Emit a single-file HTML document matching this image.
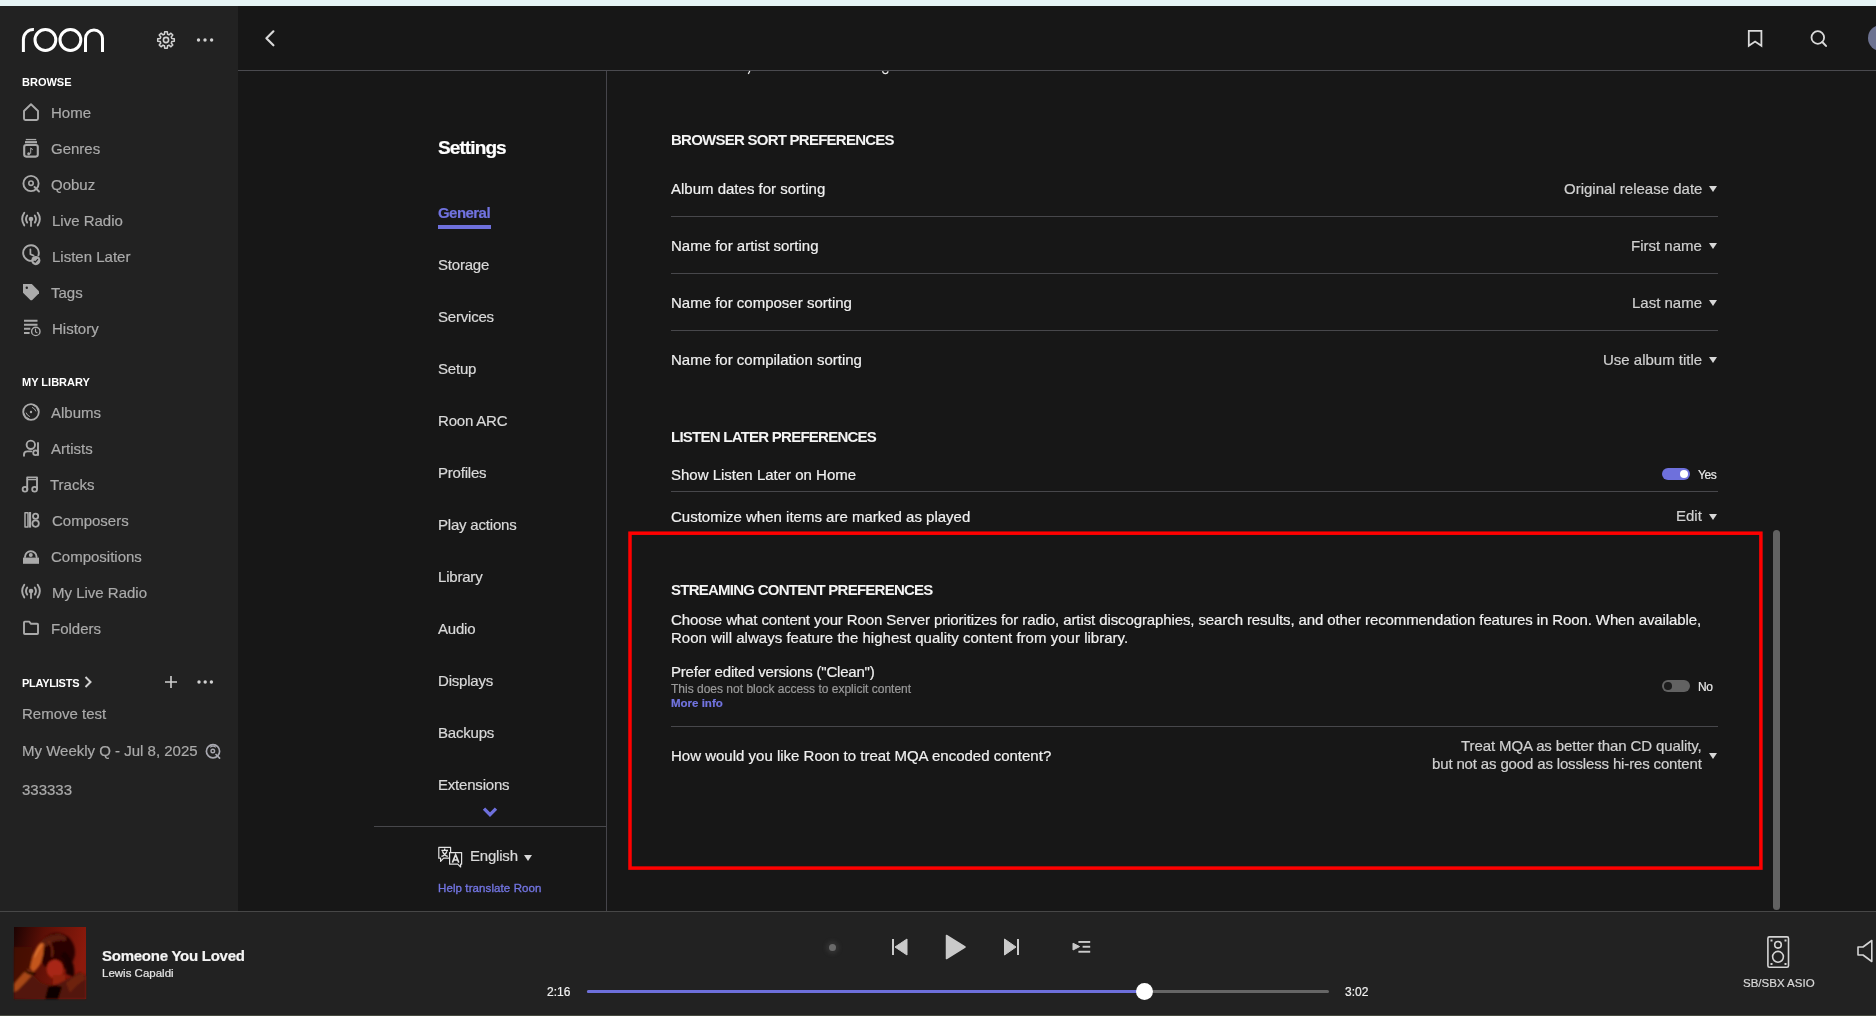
<!DOCTYPE html>
<html><head><meta charset="utf-8">
<style>
*{margin:0;padding:0;box-sizing:border-box}
html,body{width:1876px;height:1016px;overflow:hidden;background:#171717;font-family:"Liberation Sans",sans-serif}
.a{position:absolute}
.t{position:absolute;line-height:1;white-space:nowrap;will-change:transform;-webkit-text-stroke:0.2px currentColor}
svg{position:absolute;overflow:visible}
#strip{left:0;top:0;width:1876px;height:6px;background:#e6f4f5}
#side{left:0;top:6px;width:238px;height:905px;background:#222222}
#hdr{left:238px;top:6px;width:1638px;height:64px;background:#171717}
#hline{left:238px;top:70px;width:1638px;height:1px;background:#4a4a4f}
#player{left:0;top:911px;width:1876px;height:105px;background:#222222}
#pline{left:0;top:911px;width:1876px;height:1px;background:#474747}
.sh{font-size:11px;font-weight:700;color:#ffffff;-webkit-text-stroke:0}
.si{font-size:15px;color:#aaaaaa}
.nav{font-size:15px;color:#d9d9d9;letter-spacing:-0.2px}
.h2{font-size:15px;font-weight:700;color:#f4f4f4;letter-spacing:-0.75px;-webkit-text-stroke:0}
.row{font-size:15px;color:#f0f0f0}
.val{font-size:15px;color:#d0d0d0}
.dv{position:absolute;height:1px;background:#47474b}
.tri{position:absolute;width:0;height:0;border-left:4.5px solid transparent;border-right:4.5px solid transparent;border-top:6px solid #d8d8d8}
</style></head><body>
<div id="strip" class="a"></div>
<div id="side" class="a"></div>
<div id="hdr" class="a"></div>

<!-- ============ SIDEBAR ============ -->
<svg style="left:0;top:0" width="120" height="60" viewBox="0 0 120 60">
 <g fill="none" stroke="#ffffff" stroke-width="3">
  <path d="M23.4 52 V39.5 A10 10 0 0 1 33.9 29.5"/>
  <circle cx="45.4" cy="40" r="10.4"/>
  <circle cx="70.4" cy="40" r="10.4"/>
  <path d="M85.5 52 V38.5 A8.5 8.5 0 0 1 102.5 38.5 V52"/>
 </g>
</svg>
<!-- gear -->
<svg style="left:156px;top:30px" width="20" height="20" viewBox="-10 -10 20 20">
 <path fill="none" stroke="#d2d2d2" stroke-width="1.5" stroke-linejoin="round" d="M-2.30 -5.54 L-1.55 -5.80 L-1.31 -8.30 L1.31 -8.30 L1.55 -5.80 L2.30 -5.54 L3.00 -5.20 L4.94 -6.80 L6.80 -4.94 L5.20 -3.00 L5.54 -2.30 L5.80 -1.55 L8.30 -1.31 L8.30 1.31 L5.80 1.55 L5.54 2.30 L5.20 3.00 L6.80 4.94 L4.94 6.80 L3.00 5.20 L2.30 5.54 L1.55 5.80 L1.31 8.30 L-1.31 8.30 L-1.55 5.80 L-2.30 5.54 L-3.00 5.20 L-4.94 6.80 L-6.80 4.94 L-5.20 3.00 L-5.54 2.30 L-5.80 1.55 L-8.30 1.31 L-8.30 -1.31 L-5.80 -1.55 L-5.54 -2.30 L-5.20 -3.00 L-6.80 -4.94 L-4.94 -6.80 L-3.00 -5.20 Z"/>
 <circle cx="0" cy="0" r="2.6" fill="none" stroke="#d2d2d2" stroke-width="1.6"/>
</svg>
<svg style="left:195px;top:36px" width="20" height="8" viewBox="0 0 20 8">
 <circle cx="3.5" cy="4" r="1.7" fill="#d2d2d2"/><circle cx="10" cy="4" r="1.7" fill="#d2d2d2"/><circle cx="16.6" cy="4" r="1.7" fill="#d2d2d2"/>
</svg>

<!-- sidebar icons -->
<svg style="left:0;top:0" width="238" height="911" viewBox="0 0 238 911">
 <g fill="none" stroke="#aaaaaa" stroke-width="1.9" stroke-linejoin="round" stroke-linecap="round">
  <!-- home -->
  <path d="M24 111 L31 104.3 L38 111 V118.6 Q38 120 36.6 120 H25.4 Q24 120 24 118.6 Z"/>
  <!-- genres -->
  <rect x="24.2" y="145" width="13.6" height="11.6" rx="2" stroke-width="2.1"/>
  <!-- qobuz -->
  <circle cx="31" cy="183.5" r="7.6"/>
  <circle cx="31" cy="183.2" r="2.2" stroke-width="1.6"/>
  <path d="M34.5 187 L39 191.5"/>
  <!-- live radio -->
  <path d="M27.2 215.5 Q24.8 219 27.2 222.6 M34.8 215.5 Q37.2 219 34.8 222.6"/>
  <path d="M24.3 212.8 Q20 219 24.3 225.4 M37.7 212.8 Q42 219 37.7 225.4"/>
  <path d="M31 219 V226" stroke-width="1.8"/>
  <!-- listen later -->
  <path d="M34.6 259.9 A7.8 7.8 0 1 1 38.4 255.4"/>
  <path d="M30.4 249.3 V254.2 L33.6 255.6" stroke-width="1.7"/>
  <!-- history -->
  <path d="M24 320.8 H37.5 M24 324.8 H37.5 M24 328.8 H30.3 M24 332.9 H29.6" stroke-width="2" stroke-linecap="butt"/>
  <circle cx="35.8" cy="331.4" r="4.2" stroke-width="1.4"/>
  <path d="M35.5 329 V331.8 L37 332.8" stroke-width="1.1"/>
  <!-- albums -->
  <circle cx="31" cy="412" r="7.8" stroke-width="1.8"/>
  <path d="M32.5 407.5 Q35 408.5 35.8 411 M33.2 405.2 Q37.3 406.6 38 410.4 M29.5 416.5 Q27 415.5 26.2 413 M28.8 418.8 Q24.7 417.4 24 413.6" stroke-width="1"/>
  <!-- artists -->
  <circle cx="30.8" cy="444.8" r="4.2" stroke-width="1.9"/>
  <path d="M24 455.8 V454.5 Q24 451.4 27.4 451.4 H31.2"/>
  <path d="M38 443 V455"/>
  <circle cx="35.6" cy="452.8" r="2.4" stroke-width="1.8"/>
  <!-- tracks -->
  <path d="M27.2 490 V477.4 H37 V489.6" stroke-linecap="butt"/>
  <path d="M27.2 479.6 H37" stroke-width="1.2"/>
  <circle cx="25" cy="489.2" r="2.4" stroke-width="1.8"/>
  <circle cx="34.6" cy="489.2" r="2.4" stroke-width="1.8"/>
  <!-- composers -->
  <rect x="25" y="512.7" width="3" height="14.4" stroke-width="1.5"/>
  <path d="M30 512 V527.6" stroke-width="2.2" stroke-linecap="butt"/>
  <circle cx="35.6" cy="516.2" r="2.6" stroke-width="1.8"/>
  <circle cx="35.6" cy="523.6" r="3.2" stroke-width="1.8"/>
  <!-- compositions -->
  <path d="M25 557 A5.8 5.8 0 0 1 36.6 557" stroke-width="2"/>
  <!-- my live radio -->
  <path d="M27.2 587.5 Q24.8 591 27.2 594.6 M34.8 587.5 Q37.2 591 34.8 594.6"/>
  <path d="M24.3 584.8 Q20 591 24.3 597.4 M37.7 584.8 Q42 591 37.7 597.4"/>
  <path d="M31 591 V598" stroke-width="1.8"/>
  <!-- folders -->
  <path d="M24 633.2 V622.4 Q24 621.6 24.8 621.6 H29.2 L31 623.8 H37.2 Q38 623.8 38 624.6 V633.2 Q38 634 37.2 634 H24.8 Q24 634 24 633.2 Z"/>
 </g>
 <g fill="#aaaaaa">
  <!-- genres lines -->
  <rect x="25.8" y="138.9" width="10.4" height="1.3"/>
  <rect x="25" y="141.1" width="12" height="2.2"/>
  <path d="M30.2 153.8 a1.5 1.5 0 1 1 0 -0.1 V147.6 Q32.2 148.2 33 149.8 L32.4 150.2 Q31.8 149.3 31.2 149.1 V153.6 Z"/>
  <!-- live radio dot -->
  <circle cx="31" cy="219" r="2.3"/>
  <circle cx="31" cy="591" r="2.3"/>
  <!-- listen later badge -->
  <circle cx="35.8" cy="260.6" r="4.6"/>
  <!-- tags -->
  <path d="M23 284 H31.8 L39 291.2 V293.2 L32 300.2 H30.6 L23 292.7 Z"/>
  <!-- albums dot -->
  <circle cx="31" cy="412" r="1.2"/>
  <!-- compositions -->
  <rect x="23" y="557.6" width="16" height="6.2"/>
  <circle cx="30.8" cy="555" r="2"/>
  <!-- playlist qobuz icon -->
 </g>
 <circle cx="26.8" cy="287.7" r="1.2" fill="#222"/>
 <path d="M33.7 260.8 L35.2 262.2 L38 259.2" fill="none" stroke="#222" stroke-width="1.1"/>
 <!-- my weekly q icon -->
 <g fill="none" stroke="#a8a8b0" stroke-width="1.7">
  <circle cx="213" cy="751.3" r="6.6"/>
  <circle cx="212.8" cy="751" r="1.8" stroke-width="1.4"/>
  <path d="M216 754.5 L219.6 758.2" stroke-linecap="round"/>
 </g>
 <path d="M210.2 747.4 A3.8 3.8 0 0 1 215.8 747.4" fill="none" stroke="#a8a8b0" stroke-width="1.2"/>
</svg>
<div class="t sh" style="left:22px;top:76.5px">BROWSE</div>
<div class="t si" style="left:51px;top:105px">Home</div>
<div class="t si" style="left:51px;top:141px">Genres</div>
<div class="t si" style="left:51px;top:177px">Qobuz</div>
<div class="t si" style="left:52px;top:213px">Live Radio</div>
<div class="t si" style="left:52px;top:249px">Listen Later</div>
<div class="t si" style="left:51px;top:285px">Tags</div>
<div class="t si" style="left:52px;top:321px">History</div>

<div class="t sh" style="left:22px;top:376.5px">MY LIBRARY</div>
<div class="t si" style="left:51px;top:405px">Albums</div>
<div class="t si" style="left:51px;top:441px">Artists</div>
<div class="t si" style="left:50px;top:477px">Tracks</div>
<div class="t si" style="left:52px;top:513px">Composers</div>
<div class="t si" style="left:51px;top:549px">Compositions</div>
<div class="t si" style="left:52px;top:585px">My Live Radio</div>
<div class="t si" style="left:51px;top:621px">Folders</div>

<div class="t sh" style="left:22px;top:677.5px;letter-spacing:-0.25px">PLAYLISTS</div>
<svg style="left:84px;top:676px" width="10" height="12" viewBox="0 0 10 12"><path d="M1.5 1 L6.5 6 L1.5 11" fill="none" stroke="#d0d0d0" stroke-width="2"/></svg>
<svg style="left:164px;top:675px" width="14" height="14" viewBox="0 0 14 14"><path d="M7 1 V13 M1 7 H13" stroke="#d0d0d0" stroke-width="1.6"/></svg>
<svg style="left:195px;top:678px" width="20" height="8" viewBox="0 0 20 8">
 <circle cx="4" cy="4" r="1.7" fill="#d2d2d2"/><circle cx="10.2" cy="4" r="1.7" fill="#d2d2d2"/><circle cx="16.4" cy="4" r="1.7" fill="#d2d2d2"/>
</svg>
<div class="t si" style="left:22px;top:706px">Remove test</div>
<div class="t si" style="left:22px;top:743px">My Weekly Q - Jul 8, 2025</div>
<div class="t si" style="left:22px;top:782px">333333</div>

<!-- ============ HEADER ============ -->
<div id="hline" class="a"></div>
<svg style="left:260px;top:28px" width="20" height="22" viewBox="260 28 20 22"><path d="M273.4 31.3 L266.4 38.3 L273.4 45.3" fill="none" stroke="#d8d8d8" stroke-width="2.2" stroke-linecap="round" stroke-linejoin="round"/></svg>
<svg style="left:1745px;top:28px" width="20" height="22" viewBox="0 0 20 22"><path d="M3.8 2.9 H16.4 V17.8 L10.1 13.6 L3.8 17.8 Z" fill="none" stroke="#dadada" stroke-width="1.8"/></svg>
<svg style="left:1808px;top:28px" width="22" height="22" viewBox="0 0 22 22"><circle cx="9.8" cy="9.5" r="6.3" fill="none" stroke="#dadada" stroke-width="1.8"/><path d="M14.3 14 L18 17.9" stroke="#dadada" stroke-width="2" stroke-linecap="round"/></svg>
<div class="a" style="left:1868px;top:25px;width:26px;height:26px;border-radius:50%;background:#6c7291"></div>

<!-- ============ SETTINGS NAV ============ -->
<div class="a" style="left:606px;top:71px;width:1px;height:840px;background:#46454b"></div>
<div class="t" style="left:438px;top:138px;font-size:19px;font-weight:700;color:#ffffff;letter-spacing:-0.9px">Settings</div>
<div class="t" style="left:438px;top:205px;font-size:15px;font-weight:700;color:#7173e0;letter-spacing:-0.55px">General</div>
<div class="a" style="left:438px;top:225px;width:53px;height:4px;background:#6e70dc"></div>
<div class="t nav" style="left:438px;top:257px">Storage</div>
<div class="t nav" style="left:438px;top:309px">Services</div>
<div class="t nav" style="left:438px;top:361px">Setup</div>
<div class="t nav" style="left:438px;top:413px">Roon ARC</div>
<div class="t nav" style="left:438px;top:465px">Profiles</div>
<div class="t nav" style="left:438px;top:517px">Play actions</div>
<div class="t nav" style="left:438px;top:569px">Library</div>
<div class="t nav" style="left:438px;top:621px">Audio</div>
<div class="t nav" style="left:438px;top:673px">Displays</div>
<div class="t nav" style="left:438px;top:725px">Backups</div>
<div class="t nav" style="left:438px;top:777px">Extensions</div>
<svg style="left:482px;top:805.5px" width="16" height="12" viewBox="0 0 16 12"><path d="M2 2.6 L8 8.6 L14 2.6" fill="none" stroke="#6e70dc" stroke-width="3.3"/></svg>
<div class="dv" style="left:374px;top:826px;width:232px"></div>
<svg style="left:436px;top:845px" width="28" height="24" viewBox="436 845 28 24">
 <g stroke="#e2e2e2" stroke-width="1.2" stroke-linejoin="round">
  <path d="M438.8 847.4 H450.6 V858.2 H443.6 L440.6 861.4 V858.2 H438.8 Z" fill="none"/>
  <path d="M449.6 852.6 H461.6 V864.2 H460.6 V867 L457.8 864.2 H449.6 Z" fill="#171717"/>
 </g>
 <g fill="none" stroke="#e2e2e2" stroke-width="1">
  <path d="M441.4 850.4 H448 M444.7 848.4 V850.4 M442.4 851.2 Q444.4 855.6 447.8 856.4 M447 851.2 Q445 855.6 441.4 856.4" stroke-width="1.4"/>
  <path d="M452.4 862.6 L455.6 854.6 L458.8 862.6 M453.6 860 H457.6" stroke-width="1.6"/>
 </g>
</svg>
<div class="t nav" style="left:470px;top:848px">English</div>
<div class="tri" style="left:524px;top:855px"></div>
<div class="t" style="left:438px;top:883px;font-size:11.5px;color:#7274e0;-webkit-text-stroke:0.35px #7274e0;letter-spacing:0.1px">Help translate Roon</div>

<!-- ============ CONTENT ============ -->
<svg style="left:740px;top:70px" width="160" height="8" viewBox="740 70 160 8"><path d="M749.8 71 L748.3 74" stroke="#e8e8e8" stroke-width="1.3" fill="none"/><path d="M882.6 71.2 Q883 73.6 885.4 73.6 Q887.8 73.6 888 71.2" stroke="#e8e8e8" stroke-width="1.3" fill="none"/></svg>
<div class="t h2" style="left:671px;top:131.5px">BROWSER SORT PREFERENCES</div>
<div class="t row" style="left:671px;top:181px">Album dates for sorting</div>
<div class="t val" style="right:174px;top:181px">Original release date</div>
<div class="tri" style="left:1709px;top:186px"></div>
<div class="dv" style="left:671px;top:216px;width:1047px"></div>
<div class="t row" style="left:671px;top:238px">Name for artist sorting</div>
<div class="t val" style="right:174px;top:238px">First name</div>
<div class="tri" style="left:1709px;top:243px"></div>
<div class="dv" style="left:671px;top:273px;width:1047px"></div>
<div class="t row" style="left:671px;top:295px">Name for composer sorting</div>
<div class="t val" style="right:174px;top:295px">Last name</div>
<div class="tri" style="left:1709px;top:300px"></div>
<div class="dv" style="left:671px;top:330px;width:1047px"></div>
<div class="t row" style="left:671px;top:352px">Name for compilation sorting</div>
<div class="t val" style="right:174px;top:352px">Use album title</div>
<div class="tri" style="left:1709px;top:357px"></div>

<div class="t h2" style="left:671px;top:429px">LISTEN LATER PREFERENCES</div>
<div class="t row" style="left:671px;top:467px">Show Listen Later on Home</div>
<div class="a" style="left:1662px;top:468px;width:28px;height:12px;border-radius:6px;background:#6e70dc"></div>
<div class="a" style="left:1680px;top:470px;width:8px;height:8px;border-radius:50%;background:#ffffff"></div>
<div class="t" style="left:1698px;top:469px;font-size:12px;color:#e8e8e8;letter-spacing:-0.4px">Yes</div>
<div class="dv" style="left:671px;top:491px;width:1047px"></div>
<div class="t row" style="left:671px;top:508.5px">Customize when items are marked as played</div>
<div class="t val" style="right:174px;top:507.5px">Edit</div>
<div class="tri" style="left:1709px;top:514px"></div>

<div class="t h2" style="left:671px;top:582px">STREAMING CONTENT PREFERENCES</div>
<div class="t row" style="left:671px;top:612px;letter-spacing:-0.105px">Choose what content your Roon Server prioritizes for radio, artist discographies, search results, and other recommendation features in Roon. When available,</div>
<div class="t row" style="left:671px;top:630px;letter-spacing:0.02px">Roon will always feature the highest quality content from your library.</div>
<div class="t row" style="left:671px;top:664px;letter-spacing:-0.2px">Prefer edited versions ("Clean")</div>
<div class="t" style="left:671px;top:683px;font-size:12px;color:#9a9a9a">This does not block access to explicit content</div>
<div class="t" style="left:671px;top:698px;font-size:11.5px;font-weight:700;color:#7274e0">More info</div>
<div class="a" style="left:1662px;top:680px;width:28px;height:12px;border-radius:6px;background:#626262"></div>
<div class="a" style="left:1664.2px;top:682.2px;width:7.6px;height:7.6px;border-radius:50%;background:#1c1c1c"></div>
<div class="t" style="left:1698px;top:681px;font-size:12px;color:#e8e8e8;letter-spacing:-0.3px">No</div>
<div class="dv" style="left:671px;top:726px;width:1047px"></div>
<div class="t row" style="left:671px;top:748px">How would you like Roon to treat MQA encoded content?</div>
<div class="t val" style="right:174px;top:737.5px;letter-spacing:-0.1px">Treat MQA as better than CD quality,</div>
<div class="t val" style="right:174px;top:755.5px;letter-spacing:-0.15px">but not as good as lossless hi-res content</div>
<div class="tri" style="left:1709px;top:753px"></div>

<!-- red highlight -->
<svg style="left:620px;top:520px" width="1160" height="360" viewBox="620 520 1160 360"><rect x="630" y="533.2" width="1130.9" height="334.9" fill="none" stroke="#ff0000" stroke-width="3.5"/></svg>
<!-- scrollbar -->
<div class="a" style="left:1773px;top:530px;width:7.3px;height:380px;border-radius:4px;background:#626262"></div>

<!-- ============ PLAYER ============ -->
<div id="player" class="a"></div>
<div id="pline" class="a"></div>
<!-- album art -->
<svg style="left:14px;top:927px" width="72" height="72" viewBox="0 0 72 72">
 <defs>
  <filter id="bl" x="-10%" y="-10%" width="120%" height="120%"><feGaussianBlur stdDeviation="1.2"/></filter>
  <linearGradient id="bgg" x1="0" y1="0" x2="1" y2="0.25"><stop offset="0" stop-color="#1c0302"/><stop offset="0.4" stop-color="#5a0f06"/><stop offset="1" stop-color="#8c1a0c"/></linearGradient>
 </defs>
 <rect width="72" height="72" fill="url(#bgg)"/>
 <g filter="url(#bl)">
  <rect x="0" y="20" width="18" height="36" fill="#4a0c05" opacity="0.8"/>
  <ellipse cx="43" cy="25" rx="18" ry="19" fill="#2a0604"/>
  <path d="M24 18 Q32 6 46 7 Q54 9 52 14 Q40 12 32 20 Z" fill="#5a1a0a"/>
  <path d="M34 14 Q40 20 38 30" fill="none" stroke="#7a2a10" stroke-width="1.5"/>
  <ellipse cx="41" cy="42" rx="8.5" ry="9.5" fill="#a82812"/>
  <path d="M50 24 Q62 34 60 50 L52 47 Q53 34 47 29 Z" fill="#1e0503"/>
  <rect x="39" y="48" width="12" height="10" fill="#92220e"/>
  <path d="M0 72 V58 Q10 48 16 45 L26 55 Q34 60 44 57 Q56 51 66 45 L72 49 V72 Z" fill="#521608"/>
  <path d="M52 56 Q62 48 68 46 L72 52 Q64 56 56 66 Z" fill="#6e2410"/>
  <path d="M31 72 L34 60 Q41 57 48 60 L44 72 Z" fill="#0c0202"/>
  <path d="M16 41 Q18 29 23 20 Q27 14 30 17 Q30 27 27 36 Q23 43 19 45 Z" fill="#c4561e"/>
  <path d="M20 30 Q24 22 28 17" fill="none" stroke="#e07a34" stroke-width="1.6"/>
  <path d="M0 57 Q8 47 14 42 L19 47 Q12 55 4 63 L0 65 Z" fill="#a84818"/>
  <path d="M12 44 Q16 48 21 46" fill="none" stroke="#140403" stroke-width="2.5"/>
 </g>
</svg>
<div class="t" style="left:102px;top:948px;font-size:15px;font-weight:700;color:#f4f4f4;letter-spacing:-0.25px">Someone You Loved</div>
<div class="t" style="left:102px;top:968px;font-size:11.5px;color:#e6e6e6">Lewis Capaldi</div>
<!-- controls -->
<div class="a" style="left:829px;top:943.5px;width:7px;height:7px;border-radius:50%;background:#6a6a6a;box-shadow:0 0 4px 3px rgba(90,90,90,.3)"></div>
<svg style="left:890px;top:937px" width="20" height="20" viewBox="0 0 20 20"><rect x="2" y="2" width="2" height="16" fill="#cacaca"/><path d="M17 2 L5 10 L17 18 Z" fill="#cacaca" stroke="#cacaca" stroke-width="1" stroke-linejoin="round"/></svg>
<svg style="left:944px;top:934px" width="24" height="26" viewBox="0 0 24 26"><path d="M2.5 1.5 L21 13 L2.5 24.5 Z" fill="#cacaca" stroke="#cacaca" stroke-width="1.5" stroke-linejoin="round"/></svg>
<svg style="left:1002px;top:937px" width="20" height="20" viewBox="0 0 20 20"><rect x="15" y="2" width="2" height="16" fill="#cacaca"/><path d="M2.5 2 L14 10 L2.5 18 Z" fill="#cacaca" stroke="#cacaca" stroke-width="1" stroke-linejoin="round"/></svg>
<svg style="left:1070px;top:937px" width="22" height="20" viewBox="0 0 22 20"><path d="M3 6.2 L9.6 9.6 L3 13 Z" fill="#cacaca" stroke="#cacaca" stroke-width="1" stroke-linejoin="round"/><rect x="8.4" y="4" width="11.8" height="1.9" fill="#cacaca"/><rect x="12.6" y="8.8" width="7.6" height="1.9" fill="#cacaca"/><rect x="8.4" y="13.8" width="11.8" height="1.9" fill="#cacaca"/></svg>
<!-- progress -->
<div class="t" style="left:547px;top:986px;font-size:12px;color:#f0f0f0">2:16</div>
<div class="a" style="left:587px;top:990px;width:742px;height:3px;border-radius:2px;background:#666666"></div>
<div class="a" style="left:587px;top:990px;width:557px;height:3px;border-radius:2px;background:#6e70dc"></div>
<div class="a" style="left:1135.5px;top:982.5px;width:17px;height:17px;border-radius:50%;background:#ffffff"></div>
<div class="t" style="left:1345px;top:986px;font-size:12px;color:#f0f0f0">3:02</div>
<!-- zone -->
<svg style="left:1765px;top:934px" width="26" height="36" viewBox="0 0 26 36"><rect x="2.9" y="2.9" width="20.6" height="30.4" rx="1.5" fill="none" stroke="#d4d4d4" stroke-width="1.6"/><rect x="5.5" y="5.5" width="2" height="2" fill="#d4d4d4"/><rect x="19.5" y="5.5" width="2" height="2" fill="#d4d4d4"/><rect x="5.5" y="29" width="2" height="2" fill="#d4d4d4"/><rect x="19.5" y="29" width="2" height="2" fill="#d4d4d4"/><circle cx="13" cy="10.8" r="3.3" fill="none" stroke="#d4d4d4" stroke-width="1.6"/><circle cx="13" cy="22.8" r="5.4" fill="none" stroke="#d4d4d4" stroke-width="1.6"/></svg>
<div class="t" style="left:1743px;top:978px;font-size:11.5px;color:#d8d8d8">SB/SBX ASIO</div>
<svg style="left:1854px;top:937px" width="22" height="28" viewBox="0 0 22 28"><path d="M4 10 H9 L17.8 3.5 V24.5 L9 18 H4 Z" fill="none" stroke="#d4d4d4" stroke-width="1.6" stroke-linejoin="round"/></svg>
<div class="a" style="left:0;top:1015px;width:1876px;height:1px;background:#474a40"></div>
</body></html>
